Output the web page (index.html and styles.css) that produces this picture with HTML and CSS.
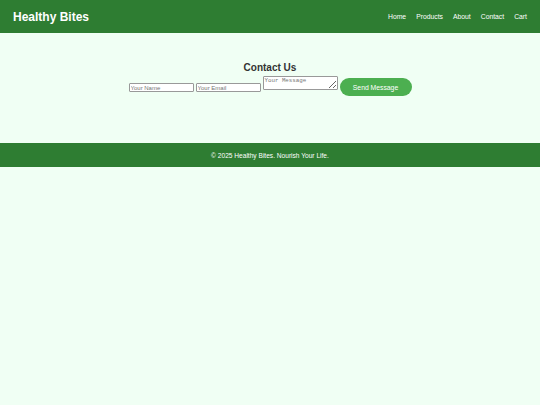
FILE: index.html
```html
<!DOCTYPE html>
<html>
<head>
<meta charset="utf-8">
<link rel="stylesheet" href="styles.css">
</head>
<body>
<header class="site-header">
  <div class="logo">Healthy Bites</div>
  <nav class="nav">
    <a href="#">Home</a>
    <a href="#">Products</a>
    <a href="#">About</a>
    <a href="#">Contact</a>
    <a href="#">Cart</a>
  </nav>
</header>
<main class="contact">
  <h2 class="contact-title">Contact Us</h2>
  <form class="contact-form">
    <input class="field" type="text" placeholder="Your Name">
    <input class="field" type="email" placeholder="Your Email">
    <textarea class="message" placeholder="Your Message"></textarea>
    <button class="send" type="button">Send Message</button>
  </form>
</main>
<footer class="site-footer">© 2025 Healthy Bites. Nourish Your Life.</footer>
</body>
</html>
```
FILE: styles.css
```css
html, body {
  margin: 0;
  padding: 0;
  background: #f0fff4;
  font-family: "Liberation Sans", Arial, sans-serif;
}
.site-header {
  height: 33px;
  background: #2e7d32;
  display: flex;
  align-items: center;
  justify-content: space-between;
  padding: 0 13px;
  color: #fff;
}
.logo {
  font-size: 12px;
  font-weight: bold;
}
.nav {
  display: flex;
  gap: 10px;
}
.nav a {
  color: #fff;
  text-decoration: none;
  font-size: 6.8px;
}
.contact {
  height: 110px;
  box-sizing: border-box;
  padding-top: 29px;
  text-align: center;
}
.contact-title {
  margin: 0 0 1px;
  font-size: 10px;
  font-weight: bold;
  color: #333;
  line-height: 12px;
}
.contact-form {
  display: flex;
  justify-content: center;
  align-items: flex-start;
  gap: 2px;
}
.field {
  width: 65px;
  height: 9px;
  box-sizing: border-box;
  padding: 0 1px;
  margin: 8px 0 0;
  font-size: 6px;
  font-family: "Liberation Sans", Arial, sans-serif;
  border: 1px solid #999;
  border-radius: 1px;
  background: #fff;
}
.message {
  width: 75px;
  height: 14px;
  box-sizing: border-box;
  padding: 0 1px;
  margin: 1px 0 0;
  font-size: 5.8px;
  font-family: "Liberation Mono", monospace;
  border: 1px solid #999;
  border-radius: 1px;
  background: #fff;
}
.send {
  width: 72px;
  height: 18px;
  margin: 3px 0 0;
  padding: 0;
  border: none;
  border-radius: 9px;
  background: #4caf50;
  color: #fff;
  font-size: 6.8px;
  font-family: "Liberation Sans", Arial, sans-serif;
}
.site-footer {
  height: 24px;
  background: #2e7d32;
  color: #fff;
  font-size: 6.6px;
  display: flex;
  align-items: center;
  justify-content: center;
}
```
